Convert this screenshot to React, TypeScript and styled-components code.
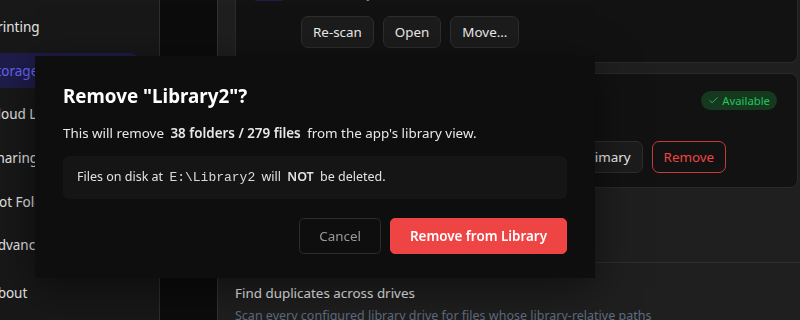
import React from "react";
import styled, { createGlobalStyle } from "styled-components";
import { Check, HardDrive } from "lucide-react";

const GlobalStyle = createGlobalStyle`
  html, body { margin: 0; padding: 0; background: #0c0c0c; overflow: hidden; }
  body { font-family: "Segoe UI", "Noto Sans", "DejaVu Sans", sans-serif; color: #e5e5e5; }
  * { box-sizing: border-box; }
`;

const Shell = styled.div`
  display: flex;
  width: 829px;
  height: 320px;
  margin-left: -29px;
  overflow: hidden;
`;

const Sidebar = styled.nav`
  flex: none;
  width: 189px;
  background: #181818;
  border-right: 1px solid #2e2e2e;
  padding: 9px 21px 9px 8px;
  display: flex;
  flex-direction: column;
  gap: 8px;
`;

const NavItem = styled.div<{ $active?: boolean; $spaced?: boolean }>`
  height: 36px;
  display: flex;
  align-items: center;
  padding: 0 12px 0 10px;
  border-radius: 8px;
  font-size: 13.5px;
  white-space: nowrap;
  margin-top: ${(p) => (p.$spaced ? "4px" : "0")};
  color: ${(p) => (p.$active ? "#6366f1" : "#e5e5e5")};
  background: ${(p) => (p.$active ? "#1e1c4a" : "transparent")};
`;

const Main = styled.main`
  flex: 1;
  background: #0c0c0c;
  padding-left: 57px;
  overflow: hidden;
`;

const Panel = styled.section`
  width: 600px;
  margin-top: -71px;
  background: #1f1f1f;
  border: 1px solid #333;
  border-radius: 10px;
`;

const DriveArea = styled.div`
  padding: 18px 18px 30px 17px;
  display: flex;
  flex-direction: column;
`;

const DriveList = styled.div`
  display: flex;
  flex-direction: column;
  gap: 10px;
`;

const Card = styled.div`
  background: #121212;
  border: 1px solid #2a2a2a;
  border-radius: 8px;
  padding: 14px 20px 14px 14px;
  display: flex;
  gap: 13px;
`;

const DriveIcon = styled.div`
  flex: none;
  width: 38px;
  height: 38px;
  border-radius: 8px;
  background: #1e1c48;
  color: #818cf8;
  display: flex;
  align-items: center;
  justify-content: center;
`;

const Info = styled.div`
  flex: 1;
  min-width: 0;
  display: flex;
  flex-direction: column;
`;

const TitleRow = styled.div`
  height: 24px;
  display: flex;
  align-items: center;
  justify-content: space-between;
`;

const DriveName = styled.div`
  font-size: 14.5px;
  font-weight: 600;
  color: #f2f2f2;
`;

const Badge = styled.span`
  display: inline-flex;
  align-items: center;
  gap: 3px;
  height: 19px;
  padding: 0 7px 0 7px;
  border-radius: 10px;
  background: #15381f;
  color: #22c55e;
  font-size: 11.3px;
`;

const Path = styled.div`
  font-family: "Liberation Mono", "DejaVu Sans Mono", monospace;
  font-size: 12px;
  line-height: 16px;
  color: #8a8a8a;
`;

const Actions = styled.div`
  margin-top: 13px;
  display: flex;
  gap: 9px;
`;

const Btn = styled.button<{ $danger?: boolean }>`
  height: 32px;
  padding: 0 11px;
  border-radius: 7px;
  font-family: inherit;
  font-size: 13.4px;
  cursor: pointer;
  background: ${(p) => (p.$danger ? "#121212" : "#1c1c1c")};
  color: ${(p) => (p.$danger ? "#ef4444" : "#ececec")};
  border: 1px solid ${(p) => (p.$danger ? "#c93a3a" : "#2e2e2e")};
`;

const AddRow = styled.div`
  margin-top: 12px;
  display: flex;
`;

const SubSection = styled.div`
  border-top: 1px solid #2e2e2e;
  padding: 20px 18px 20px 17px;
`;

const SubTitle = styled.div`
  font-size: 13.4px;
  line-height: 20px;
  color: #ececec;
`;

const SubDesc = styled.div`
  margin-top: 4px;
  max-width: 420px;
  font-size: 12.5px;
  line-height: 18px;
  color: #5f6d80;
`;

const Dialog = styled.div`
  position: fixed;
  left: 35px;
  top: 56px;
  width: 560px;
  background: #0e0e0e;
  padding: 28px 28px 24px 28px;
  box-shadow: 0 10px 40px rgba(0, 0, 0, 0.5);
`;

const DialogTitle = styled.h2`
  margin: 0;
  font-size: 18.8px;
  line-height: 24px;
  font-weight: 700;
  color: #ffffff;
`;

const DialogText = styled.p`
  margin: 15px 0 0;
  font-size: 13.4px;
  line-height: 20px;
  color: #e8e8e8;
`;

const Strong = styled.strong`
  font-weight: 600;
  margin: 0 3px;
`;

const Note = styled.div`
  margin-top: 13px;
  padding: 11px 14px;
  background: #151515;
  border-radius: 6px;
  font-size: 12.5px;
  line-height: 20px;
  color: #e2e2e2;
`;

const Code = styled.code`
  font-family: "Liberation Mono", "DejaVu Sans Mono", monospace;
  font-size: 13px;
  color: #d8d8d8;
  margin: 0 3px;
`;

const Footer = styled.div`
  margin-top: 19px;
  display: flex;
  justify-content: flex-end;
  gap: 9px;
`;

const DialogBtn = styled.button<{ $primary?: boolean }>`
  height: 36px;
  padding: 0 ${(p) => (p.$primary ? "19px" : "19px")};
  border-radius: 5px;
  font-family: inherit;
  font-size: 13.4px;
  cursor: pointer;
  font-weight: ${(p) => (p.$primary ? 600 : 400)};
  background: ${(p) => (p.$primary ? "#ef4444" : "transparent")};
  color: ${(p) => (p.$primary ? "#ffffff" : "#9a9a9a")};
  border: 1px solid ${(p) => (p.$primary ? "#ef4444" : "#2c2c2c")};
`;

const navItems = ["Printing", "Storage", "Cloud Library", "Sharing", "Hot Folders", "Advanced", "About"];

const drives = [
  { name: "Library", path: "E:\\Library", extra: false },
  { name: "Library2", path: "E:\\Library2", extra: true },
];

export default function App() {
  return (
    <>
      <GlobalStyle />
      <Shell>
        <Sidebar>
          {navItems.map((n) => (
            <NavItem key={n} $active={n === "Storage"} $spaced={n === "About"}>
              {n}
            </NavItem>
          ))}
        </Sidebar>
        <Main>
          <Panel>
            <DriveArea>
              <DriveList>
                {drives.map((d) => (
                  <Card key={d.name}>
                    <DriveIcon>
                      <HardDrive size={20} />
                    </DriveIcon>
                    <Info>
                      <TitleRow>
                        <DriveName>{d.name}</DriveName>
                        <Badge>
                          <Check size={11} strokeWidth={2} />
                          Available
                        </Badge>
                      </TitleRow>
                      <Path>{d.path}</Path>
                      <Actions>
                        <Btn>Re-scan</Btn>
                        <Btn>Open</Btn>
                        <Btn>Move...</Btn>
                        {d.extra && <Btn>Set as Primary</Btn>}
                        {d.extra && <Btn $danger>Remove</Btn>}
                      </Actions>
                    </Info>
                  </Card>
                ))}
              </DriveList>
              <AddRow>
                <Btn>+ Add Library Drive</Btn>
              </AddRow>
            </DriveArea>
            <SubSection>
              <SubTitle>Find duplicates across drives</SubTitle>
              <SubDesc>Scan every configured library drive for files whose library-relative paths match.</SubDesc>
            </SubSection>
          </Panel>
        </Main>
      </Shell>
      <Dialog role="dialog">
        <DialogTitle>Remove "Library2"?</DialogTitle>
        <DialogText>
          This will remove <Strong>38 folders / 279 files</Strong> from the app's library view.
        </DialogText>
        <Note>
          Files on disk at <Code>E:\Library2</Code> will <Strong>NOT</Strong> be deleted.
        </Note>
        <Footer>
          <DialogBtn>Cancel</DialogBtn>
          <DialogBtn $primary>Remove from Library</DialogBtn>
        </Footer>
      </Dialog>
    </>
  );
}
